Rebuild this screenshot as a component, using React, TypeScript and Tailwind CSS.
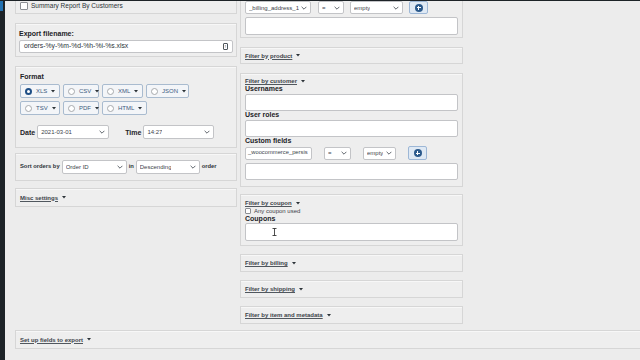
import type { ReactNode } from "react";

const font = "font-['Liberation_Sans',Arial,sans-serif]";

function Box({ className = "", children }: { className?: string; children?: ReactNode }) {
  return (
    <div className={`border border-[#d6d6d6] bg-[#eeeeee] shadow-[inset_0_1px_0_#f7f7f7] ${className}`}>
      {children}
    </div>
  );
}

function Tri({ className = "" }: { className?: string }) {
  return (
    <svg width="4" height="3" viewBox="0 0 4 3" className={`shrink-0 ${className}`}>
      <path d="M0 0 H4 L2 2.6 Z" fill="#2c3338" />
    </svg>
  );
}

function Toggle({ label }: { label: string }) {
  return (
    <div className="flex items-center">
      <span className="text-[6px] font-bold leading-none text-[#3c434a] underline decoration-[#50575e] underline-offset-[1px]">
        {label}
      </span>
      <Tri className="ml-[4px]" />
    </div>
  );
}

function Chevron() {
  return (
    <svg width="6" height="4" viewBox="0 0 6 4" className="shrink-0">
      <path d="M0.6 0.8 L3 3.2 L5.4 0.8" fill="none" stroke="#50575e" strokeWidth="0.9" />
    </svg>
  );
}

function Select({ value, className = "" }: { value: string; className?: string }) {
  return (
    <div
      className={`flex h-[13px] shrink-0 items-center justify-between gap-[2px] rounded-[2px] border border-[#c3c4c7] bg-white px-[3px] text-[6px] leading-none text-[#3c434a] ${className}`}
    >
      <span className="overflow-hidden whitespace-nowrap">{value}</span>
      <Chevron />
    </div>
  );
}

function PlusButton({ className = "" }: { className?: string }) {
  return (
    <div
      className={`flex h-[13px] w-[19px] shrink-0 items-center justify-center rounded-[2px] border border-[#9db7d6] bg-[#dfe9f4] ${className}`}
    >
      <div className="relative h-[8px] w-[8px] rounded-full bg-[#2c5a8c]">
        <div className="absolute left-[2px] top-[3.5px] h-[1px] w-[4px] bg-white" />
        <div className="absolute left-[3.5px] top-[2px] h-[4px] w-[1px] bg-white" />
      </div>
    </div>
  );
}

function Chip({ label, w, checked = false }: { label: string; w: string; checked?: boolean }) {
  return (
    <div
      className={`flex h-[14px] shrink-0 items-center gap-[4px] rounded-[2px] border border-[#a9bbcf] bg-[#f3f5f8] pl-[4px] ${w}`}
    >
      {checked ? (
        <span className="h-[7px] w-[7px] shrink-0 rounded-full border-[2px] border-[#1f4f86] bg-white" />
      ) : (
        <span className="h-[7px] w-[7px] shrink-0 rounded-full border border-[#a7aaad] bg-white" />
      )}
      <span className="text-[6px] leading-none text-[#3d5a7d]">{label}</span>
      <Tri />
    </div>
  );
}

function FieldLabel({ children }: { children: ReactNode }) {
  return <div className="text-[7px] font-bold leading-[8px] text-[#1d2327]">{children}</div>;
}

function Input({ className = "", children }: { className?: string; children?: ReactNode }) {
  return (
    <div className={`rounded-[2px] border border-[#c3c4c7] bg-white ${className}`}>{children}</div>
  );
}

function LeftColumn() {
  return (
    <div className="flex w-[222px] flex-col">
      <Box className="flex h-[24px] items-end px-[4px] pb-[3px]">
        <div className="flex items-center gap-[3px]">
          <span className="h-[8px] w-[8px] rounded-[1px] border border-[#8c8f94] bg-white" />
          <span className="text-[6.5px] leading-none text-[#2c3338]">Summary Report By Customers</span>
        </div>
      </Box>

      <Box className="mt-[9px] h-[34px] px-[3px] pt-[6px]">
        <FieldLabel>Export filename:</FieldLabel>
        <Input className="mt-[2px] flex h-[13px] items-center justify-between px-[4px]">
          <span className="text-[6.8px] leading-none text-[#2c3338]">orders-%y-%m-%d-%h-%i-%s.xlsx</span>
          <span className="flex h-[7px] w-[5px] items-center justify-center rounded-[1px] border border-[#50575e] text-[4px] font-bold leading-none text-[#50575e]">
            !
          </span>
        </Input>
      </Box>

      <Box className="mt-[9px] h-[82px] px-[4px] pt-[6px]">
        <FieldLabel>Format</FieldLabel>
        <div className="mt-[3px] flex gap-[3px]">
          <Chip label="XLS" w="w-[40px]" checked />
          <Chip label="CSV" w="w-[36px]" />
          <Chip label="XML" w="w-[41px]" />
          <Chip label="JSON" w="w-[43px]" />
        </div>
        <div className="mt-[3px] flex gap-[3px]">
          <Chip label="TSV" w="w-[40px]" />
          <Chip label="PDF" w="w-[36px]" />
          <Chip label="HTML" w="w-[45px]" />
        </div>
        <div className="mt-[10px] flex items-center">
          <span className="text-[7px] font-bold leading-none text-[#1d2327]">Date</span>
          <Select value="2021-03-01" className="ml-[2px] h-[14px] w-[72px] text-[6.5px]" />
          <span className="ml-[16px] text-[7px] font-bold leading-none text-[#1d2327]">Time</span>
          <Select value="14:27" className="ml-[2px] h-[14px] w-[71px] text-[6.5px]" />
        </div>
      </Box>

      <Box className="mt-[5px] flex h-[28px] items-center px-[4px]">
        <span className="text-[5.8px] font-bold leading-none text-[#2c3338]">Sort orders by</span>
        <Select value="Order ID" className="ml-[2px] h-[14px] w-[65px] text-[6.5px]" />
        <span className="ml-[2px] text-[5.8px] font-bold leading-none text-[#2c3338]">in</span>
        <Select value="Descending" className="ml-[2px] h-[14px] w-[64px] text-[6.5px]" />
        <span className="ml-[2px] text-[5.8px] font-bold leading-none text-[#2c3338]">order</span>
      </Box>

      <Box className="mt-[7px] flex h-[19px] items-center px-[4px]">
        <Toggle label="Misc settings" />
      </Box>
    </div>
  );
}

function RightColumn() {
  return (
    <div className="flex w-[223px] flex-col">
      <Box className="h-[48px] px-[4px] pt-[10px]">
        <div className="flex items-center">
          <Select value="_billing_address_1" className="w-[66px] text-[5.6px]" />
          <Select value="=" className="ml-[7px] w-[26px]" />
          <Select value="empty" className="ml-[6px] w-[53px]" />
          <PlusButton className="ml-[6px]" />
        </div>
        <Input className="mt-[3px] h-[18px]" />
      </Box>

      <Box className="mt-[9px] flex h-[17px] items-center px-[4px]">
        <Toggle label="Filter by product" />
      </Box>

      <Box className="mt-[9px] h-[114px] px-[4px] pt-[4px]">
        <Toggle label="Filter by customer" />
        <div className="mt-[1px]">
          <FieldLabel>Usernames</FieldLabel>
        </div>
        <Input className="mt-[1px] h-[17px]" />
        <FieldLabel>User roles</FieldLabel>
        <Input className="mt-[1px] h-[17px]" />
        <FieldLabel>Custom fields</FieldLabel>
        <div className="mt-[1px] flex items-center">
          <Input className="flex h-[13px] w-[67px] shrink-0 items-center overflow-hidden px-[2px]">
            <span className="whitespace-nowrap text-[5.8px] leading-none text-[#3c434a]">_woocommerce_persis</span>
          </Input>
          <Select value="=" className="ml-[12px] w-[27px]" />
          <Select value="empty" className="ml-[12px] w-[33px]" />
          <PlusButton className="ml-[12px] h-[14px]" />
        </div>
        <Input className="mt-[3px] h-[17px]" />
      </Box>

      <Box className="mt-[7px] h-[52px] px-[4px] pt-[5px]">
        <Toggle label="Filter by coupon" />
        <div className="mt-[2px] flex items-center gap-[3px]">
          <span className="h-[6px] w-[6px] rounded-[1px] border border-[#8c8f94] bg-white" />
          <span className="text-[6px] leading-none text-[#3c434a]">Any coupon used</span>
        </div>
        <div className="mt-[1px]">
          <FieldLabel>Coupons</FieldLabel>
        </div>
        <Input className="relative h-[18px]">
          <svg width="5" height="8" viewBox="0 0 5 8" className="absolute left-[26px] top-[4px]">
            <path d="M0.5 0.5 H4.5 M2.5 0.5 V7.5 M0.5 7.5 H4.5" fill="none" stroke="#222" strokeWidth="0.8" />
          </svg>
        </Input>
      </Box>

      <Box className="mt-[8px] flex h-[18px] items-center px-[4px]">
        <Toggle label="Filter by billing" />
      </Box>
      <Box className="mt-[8px] flex h-[18px] items-center px-[4px]">
        <Toggle label="Filter by shipping" />
      </Box>
      <Box className="mt-[8px] flex h-[18px] items-center px-[4px]">
        <Toggle label="Filter by item and metadata" />
      </Box>
    </div>
  );
}

export default function App() {
  return (
    <div className={`flex h-[360px] w-[640px] overflow-hidden border-t border-[#1d2327] bg-[#ececec] ${font}`}>
      <div className="flex w-[5px] shrink-0 flex-col bg-[#1d2327]">
        <div className="h-[10px] w-[3px] bg-[#2271b1]" />
      </div>
      <main className="-mt-[11px] flex-1 pl-[10px]">
        <div className="flex gap-[3px]">
          <LeftColumn />
          <RightColumn />
        </div>
        <Box className="mt-[6px] -mr-[10px] flex h-[19px] items-center px-[4px]">
          <Toggle label="Set up fields to export" />
        </Box>
      </main>
    </div>
  );
}
